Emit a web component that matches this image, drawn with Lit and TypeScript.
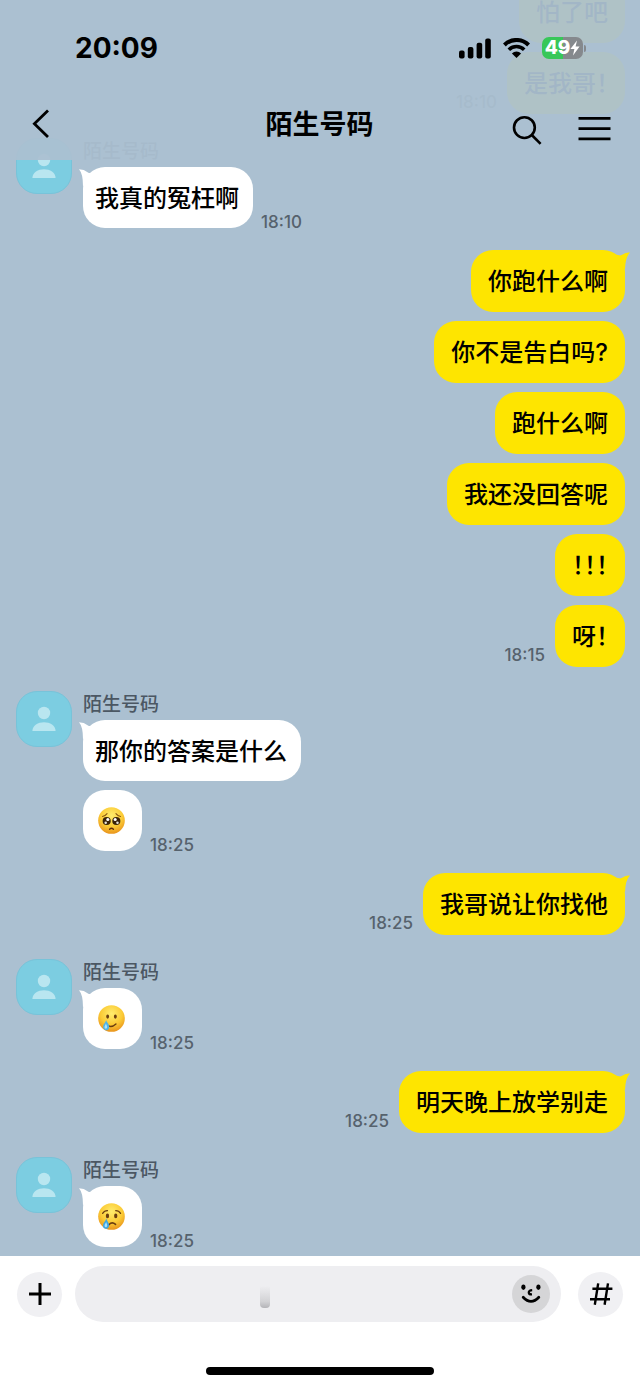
import { LitElement, html, css, svg, nothing, TemplateResult } from "lit";
import { customElement, state } from "lit/decorators.js";

type EmojiName = "pleading" | "tearful" | "crying";
interface Message { text?: string; emoji?: EmojiName; }
interface Group { from: "me" | "them"; time: string; messages: Message[]; }

const CONTACT = "陌生号码";

const GROUPS: Group[] = [
  { from: "me", time: "18:10", messages: [{ text: "怕了吧" }, { text: "是我哥！" }] },
  { from: "them", time: "18:10", messages: [{ text: "我真的冤枉啊" }] },
  {
    from: "me",
    time: "18:15",
    messages: [
      { text: "你跑什么啊" },
      { text: "你不是告白吗?" },
      { text: "跑什么啊" },
      { text: "我还没回答呢" },
      { text: "！！！" },
      { text: "呀！" },
    ],
  },
  { from: "them", time: "18:25", messages: [{ text: "那你的答案是什么" }, { emoji: "pleading" }] },
  { from: "me", time: "18:25", messages: [{ text: "我哥说让你找他" }] },
  { from: "them", time: "18:25", messages: [{ emoji: "tearful" }] },
  { from: "me", time: "18:25", messages: [{ text: "明天晚上放学别走" }] },
  { from: "them", time: "18:25", messages: [{ emoji: "crying" }] },
];

const FACES: Record<EmojiName, { label: string; art: TemplateResult }> = {
  pleading: {
    label: "恳求的脸",
    art: svg`
      <circle cx="9" cy="14.5" r="4.2" fill="#3a2208"/>
      <circle cx="19" cy="14.5" r="4.2" fill="#3a2208"/>
      <circle cx="10.2" cy="13" r="1.6" fill="#fff"/>
      <circle cx="17.8" cy="13" r="1.6" fill="#fff"/>
      <circle cx="8" cy="16.4" r="1.3" fill="#e9e4dc"/>
      <circle cx="20.2" cy="16.4" r="1.3" fill="#e9e4dc"/>
      <path d="M4.6 9.8 Q7.6 9.2 9.4 6.8 M23.4 9.8 Q20.4 9.2 18.6 6.8" fill="none" stroke="#8a5712" stroke-width="1.1" stroke-linecap="round"/>
      <path d="M12 23 Q14 21.2 16 23" fill="none" stroke="#5f2c0c" stroke-width="1.4" stroke-linecap="round"/>`,
  },
  tearful: {
    label: "含泪微笑",
    art: svg`
      <ellipse cx="10" cy="12" rx="1.5" ry="2.2" fill="#6a3d10"/>
      <ellipse cx="18" cy="12" rx="1.5" ry="2.2" fill="#6a3d10"/>
      <path d="M8.6 20.4 Q13.5 24.6 18.6 19.8" fill="none" stroke="#6a3d10" stroke-width="1.5" stroke-linecap="round"/>
      <path d="M8.4 15.6 C8.8 18 12 20 11.6 23 C11.2 25.8 9.2 26.6 7.4 26 C5 25 4.8 22.6 5.8 20.6 C6.8 18.8 8 17.6 8.4 15.6Z" fill="#4fb3e8"/>
      <path d="M8.2 19.2 C8.8 21 10 22 9.4 23.6 C8.8 25 6.8 24.8 6.8 23 C6.8 21.6 7.8 20.6 8.2 19.2Z" fill="#a9e2fb"/>`,
  },
  crying: {
    label: "哭泣的脸",
    art: svg`
      <ellipse cx="9.8" cy="13.4" rx="1.7" ry="2.4" fill="#6a3d10"/>
      <ellipse cx="18.4" cy="13.4" rx="1.7" ry="2.4" fill="#6a3d10"/>
      <path d="M4.8 10.8 Q6.6 8 9.8 8 M23.4 10.8 Q21.6 8 18.4 8" fill="none" stroke="#6a3d10" stroke-width="1.3" stroke-linecap="round"/>
      <path d="M11.4 22.4 Q14.6 19 18.2 22.2" fill="none" stroke="#6a3d10" stroke-width="1.6" stroke-linecap="round"/>
      <path d="M8.6 15.8 C9 18.4 11.8 20.6 11.4 23.8 C11 26.6 8.8 27.2 7.2 26.6 C4.8 25.8 4.6 23.2 5.8 21 C6.8 19.2 8.2 18 8.6 15.8Z" fill="#3fa6e2"/>
      <path d="M8.4 19.6 C9 21.4 10 22.6 9.4 24.2 C8.8 25.6 6.8 25.2 6.8 23.6 C6.8 22 8 21 8.4 19.6Z" fill="#a9e2fb"/>`,
  },
};

function face(name: EmojiName) {
  const { label, art } = FACES[name];
  return html`<svg class="face" viewBox="0 0 28 28" role="img" aria-label=${label}>
    <defs>
      <radialGradient id="skin-${name}" cx="50%" cy="32%" r="68%">
        <stop offset="0" stop-color="#ffec6e"/>
        <stop offset=".6" stop-color="#fbcb36"/>
        <stop offset="1" stop-color="#e9941c"/>
      </radialGradient>
    </defs>
    <circle cx="14" cy="14" r="13.8" fill="url(#skin-${name})"/>
    ${art}
  </svg>`;
}

@customElement("app-root")
export class AppRoot extends LitElement {
  @state() private draft = "";

  static styles = css`
    :host {
      display: flex;
      flex-direction: column;
      position: relative;
      height: 100vh;
      overflow: hidden;
      background: #abc0d1;
      color: #000;
      font-family: Inter, "Noto Sans CJK SC", sans-serif;
    }
    * { box-sizing: border-box; }
    svg { display: block; flex: none; }
    button {
      display: grid;
      place-items: center;
      border: 0;
      padding: 0;
      background: none;
      color: inherit;
      cursor: pointer;
    }

    .header {
      position: absolute;
      z-index: 1;
      top: 0;
      left: 0;
      right: 0;
      padding-bottom: 8px;
      background: rgba(171, 192, 209, 0.95);
    }
    .status {
      display: flex;
      align-items: center;
      justify-content: space-between;
      height: 96px;
      padding: 0 54px 0 75px;
    }
    .clock { font-size: 28px; line-height: 34px; font-weight: 700; }
    .indicators { display: flex; align-items: center; gap: 12px; }
    .battery { display: flex; align-items: center; gap: 1px; }
    .cell {
      display: flex;
      align-items: center;
      justify-content: center;
      width: 41px;
      height: 22px;
      border-radius: 7px;
      background: linear-gradient(90deg, #38c759 50%, #85898d 50%);
      color: #fff;
      font-size: 19px;
      line-height: 22px;
      font-weight: 800;
    }
    .nub { width: 2px; height: 7px; border-radius: 0 2px 2px 0; background: #85898d; }
    .nav {
      display: grid;
      grid-template-columns: 1fr auto 1fr;
      align-items: center;
      height: 56px;
      padding: 0 29px 0 28px;
    }
    .back { justify-self: start; padding-left: 4px; }
    .title { margin: 0; padding-top: 2px; font-size: 27px; line-height: 36px; font-weight: 700; }
    .actions { display: flex; justify-content: flex-end; gap: 36px; padding-top: 12px; }

    .chat {
      flex: 1;
      min-height: 0;
      display: flex;
      flex-direction: column;
      justify-content: flex-end;
      overflow: hidden;
      padding: 0 15px 9px 16px;
    }
    .them { display: flex; align-items: flex-start; gap: 11px; margin-top: 24px; }
    .avatar { display: grid; place-items: center; width: 56px; height: 56px; border: 1px solid #78c3d9; border-radius: 21px; background: #7ccde1; flex: none; }
    .name { padding-top: 2px; margin-bottom: 3px; color: #4b5763; font-size: 19px; line-height: 24px; font-weight: 500; }
    .stack { display: flex; flex-direction: column; min-width: 0; gap: 9px; }
    .me { display: flex; flex-direction: column; margin-top: 22px; gap: 9px; }
    .row { display: flex; align-items: flex-end; gap: 8px; }
    .me .row { justify-content: flex-end; gap: 10px; }
    .bubble {
      position: relative;
      max-width: 440px;
      padding: 14px 14px 12px 12px;
      border-radius: 22px;
      background: #fff;
      font-size: 24px;
      line-height: 35px;
      font-weight: 500;
      font-feature-settings: "halt";
    }
    .me .bubble { padding: 14px 17px 13px; background: #fee500; }
    .tail { position: absolute; top: 2px; left: -4px; }
    .me .tail { left: auto; right: -5px; }
    .face { width: 27px; height: 27px; margin: 3px 3px 5px; }
    .time { color: #56626d; font-size: 17px; line-height: 12px; font-weight: 500; }
    .me .time { padding-bottom: 6px; }

    .composer { padding: 10px 17px 13px; background: #fff; }
    .tools { display: flex; align-items: center; gap: 13px; }
    .round { width: 45px; height: 45px; border-radius: 50%; background: #f0f0f3; flex: none; }
    .hash { margin-left: 4px; }
    .field {
      position: relative;
      display: flex;
      align-items: center;
      flex: 1;
      min-width: 0;
      height: 56px;
      padding: 0 11px 0 20px;
      border-radius: 28px;
      background: #eeeef1;
    }
    .input {
      flex: 1;
      min-width: 0;
      border: 0;
      outline: 0;
      background: none;
      font: 500 24px/32px Inter, "Noto Sans CJK SC", sans-serif;
    }
    .mark {
      position: absolute;
      left: 38%;
      bottom: 14px;
      width: 10px;
      height: 22px;
      border-radius: 0 0 4px 4px;
      background: linear-gradient(#eeeef1, #d2d2d5 70%, #b4b4b8);
    }
    .smile { width: 38px; height: 38px; border-radius: 50%; background: #d5d5d7; flex: none; }
    .home { width: 228px; max-width: 60%; height: 8px; margin: 45px auto 0; border-radius: 4px; background: #000; }
  `;

  private bubble(message: Message, from: Group["from"], first: boolean) {
    const tail = from === "me"
      ? html`<svg class="tail" width="20" height="20" viewBox="0 0 20 20"><path d="M2 2 L8 3 Q11 4 12.6 2.6 Q16 .2 20 .6 Q15.4 5 15 17 L6 12Z" fill="#fee500"/></svg>`
      : html`<svg class="tail" width="20" height="20" viewBox="0 0 20 20"><path d="M18 2 L13 3.4 Q10.6 4.6 9 3.4 Q5 .2 0 .2 Q4 4.6 4 17 L13 12Z" fill="#fff"/></svg>`;
    return html`<div class="bubble">${first ? tail : nothing}${message.emoji ? face(message.emoji) : message.text}</div>`;
  }

  private group(group: Group) {
    const last = group.messages.length - 1;
    const rows = group.messages.map((message, i) => {
      const time = i === last ? html`<time class="time">${group.time}</time>` : nothing;
      const bubble = this.bubble(message, group.from, i === 0);
      return html`<div class="row">${group.from === "me" ? [time, bubble] : [bubble, time]}</div>`;
    });
    if (group.from === "me") return html`<section class="me">${rows}</section>`;
    return html`
      <section class="them">
        <div class="avatar">
          <svg width="24" height="26" viewBox="0 0 24 26" fill="#b9e6f0">
            <circle cx="12" cy="7" r="6.2"/>
            <path d="M0.4 25 C.6 19.4 6 16.2 12 16.2 S23.4 19.4 23.6 25Z"/>
          </svg>
        </div>
        <div>
          <div class="name">${CONTACT}</div>
          <div class="stack">${rows}</div>
        </div>
      </section>`;
  }

  render() {
    return html`
      <header class="header">
        <div class="status">
          <time class="clock">20:09</time>
          <div class="indicators">
            <svg width="32" height="21" viewBox="0 0 32 21">
              <rect x="0" y="12.5" width="5.6" height="8" rx="2"/>
              <rect x="8.8" y="9" width="5.6" height="11.5" rx="2"/>
              <rect x="17.6" y="4.8" width="5.6" height="15.7" rx="2"/>
              <rect x="26.2" y="0.5" width="5.6" height="20" rx="2"/>
            </svg>
            <svg width="27" height="20" viewBox="0 0 27 20">
              <path d="M1.4 7 A17 17 0 0 1 25.6 7" fill="none" stroke="#000" stroke-width="4"/>
              <path d="M5.8 11.8 A10.8 10.8 0 0 1 21.2 11.8" fill="none" stroke="#000" stroke-width="3.6"/>
              <path d="M8.9 15.4 A6.6 6.6 0 0 1 18.1 15.4 L13.5 20Z"/>
            </svg>
            <div class="battery">
              <div class="cell">
                <span>49</span>
                <svg width="10" height="16" viewBox="0 0 10 16"><path d="M7 0.5 L0.4 9 H4.4 L3 15.5 L9.6 6.6 H5.6Z" fill="#fff"/></svg>
              </div>
              <div class="nub"></div>
            </div>
          </div>
        </div>
        <nav class="nav">
          <button class="back" aria-label="返回">
            <svg width="18" height="30" viewBox="0 0 18 30"><path d="M16 1.6 L2.4 14.8 L16 28" fill="none" stroke="#000" stroke-width="2.8"/></svg>
          </button>
          <h1 class="title">${CONTACT}</h1>
          <div class="actions">
            <button aria-label="搜索">
              <svg width="30" height="30" viewBox="0 0 30 30" fill="none" stroke="#000" stroke-width="2.6">
                <circle cx="12.4" cy="12.6" r="10.4"/><path d="M19.8 20 L28.6 28.8"/>
              </svg>
            </button>
            <button aria-label="菜单">
              <svg width="33" height="30" viewBox="0 0 33 30" fill="none" stroke="#000" stroke-width="2.8">
                <path d="M0.5 3.4 H32.5 M0.5 13.6 H32.5 M0.5 23.8 H32.5"/>
              </svg>
            </button>
          </div>
        </nav>
      </header>

      <main class="chat">${GROUPS.map((g) => this.group(g))}</main>

      <footer class="composer">
        <div class="tools">
          <button class="round" aria-label="添加">
            <svg width="24" height="24" viewBox="0 0 24 24"><path d="M12 1 V23 M1 12 H23" stroke="#000" stroke-width="3"/></svg>
          </button>
          <div class="field">
            <input class="input" type="text" aria-label="输入消息" .value=${this.draft}
              @input=${(e: Event) => (this.draft = (e.target as HTMLInputElement).value)} />
            <span class="mark"></span>
            <button class="smile" aria-label="表情">
              <svg width="22" height="22" viewBox="0 0 22 22">
                <ellipse cx="3.4" cy="4.2" rx="2.1" ry="2.7"/>
                <ellipse cx="18.4" cy="4.2" rx="2.1" ry="2.7"/>
                <path d="M12.2 7.2 Q8.6 7.4 8.8 9.6 Q9 11.6 12 11.4" fill="none" stroke="#000" stroke-width="2.3"/>
                <path d="M3.2 14.2 Q11 22.6 18.8 14.2" fill="none" stroke="#000" stroke-width="2.8" stroke-linecap="round"/>
              </svg>
            </button>
          </div>
          <button class="round hash" aria-label="话题搜索">
            <svg width="24" height="24" viewBox="0 0 24 24" fill="none" stroke="#000" stroke-width="2.4">
              <path d="M9.2 1.4 L5.8 22.8 M19 1.4 L15.6 22.8 M3.4 6.8 H23.4 M1 17.2 H21"/>
            </svg>
          </button>
        </div>
        <div class="home"></div>
      </footer>
    `;
  }
}
